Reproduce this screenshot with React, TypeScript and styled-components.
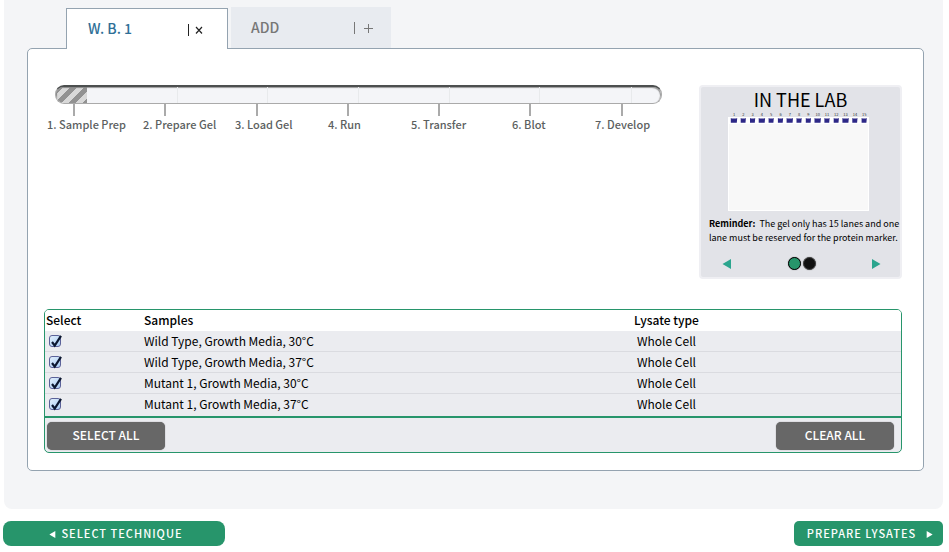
import React, { useState } from "react";
import styled, { createGlobalStyle } from "styled-components";

const GlobalStyle = createGlobalStyle`
  * { box-sizing: border-box; }
  body {
    margin: 0;
    background: #fff;
    color: #000;
    font-family: "Noto Sans CJK SC", "Noto Sans", sans-serif;
    font-size: 12px;
    line-height: 18px;
  }
  button { font-family: inherit; border: 0; padding: 0; cursor: pointer; }
`;

const Page = styled.div`
  padding: 0 6px 6px 4px;
`;

const Workspace = styled.main`
  padding: 7px 19px 38px 23px;
  background: #f4f5f7;
  border-radius: 0 0 8px 8px;
`;

const TabBar = styled.div`
  display: flex;
  align-items: flex-end;
  gap: 3px;
  padding-left: 39px;
`;

const Tab = styled.div<{ $active?: boolean }>`
  display: flex;
  align-items: center;
  justify-content: space-between;
  position: relative;
  z-index: ${(p) => (p.$active ? 1 : 0)};
  width: ${(p) => (p.$active ? 162 : 160)}px;
  height: 41px;
  margin-bottom: ${(p) => (p.$active ? -1 : 0)}px;
  padding: 0 ${(p) => (p.$active ? 24 : 17)}px 2px ${(p) => (p.$active ? 21 : 20)}px;
  background: ${(p) => (p.$active ? "#fff" : "#e8ebf0")};
  border: ${(p) => (p.$active ? "1px solid #94a3b0" : "0")};
  border-bottom: 0;
`;

const TabName = styled.button<{ $active?: boolean }>`
  background: none;
  font-size: 14px;
  font-weight: 500;
  line-height: 20px;
  color: ${(p) => (p.$active ? "#2f6f97" : "#777")};
`;

const TabAction = styled.button<{ $active?: boolean }>`
  display: flex;
  align-items: center;
  gap: ${(p) => (p.$active ? 6 : 8)}px;
  padding-top: 3px;
  background: none;
  color: ${(p) => (p.$active ? "#222" : "#777")};
  svg { display: block; }
`;

const Rule = styled.span`
  width: 1px;
  height: 12px;
  background: currentColor;
`;

const Panel = styled.section`
  padding: 36px 21px 17px 16px;
  background: #fff;
  border: 1px solid #94a3b0;
  border-radius: 5px;
`;

const Top = styled.div`
  display: flex;
  align-items: flex-start;
  gap: 37px;
  margin-bottom: 30px;
`;

const Progress = styled.div`
  flex: 1;
`;

const Track = styled.div`
  display: grid;
  height: 19px;
  margin-left: 11px;
  background: #f4f5f8;
  border: 1px solid #aaa;
  border-top: 2px solid #4c4f4f;
  border-radius: 9px;
  box-shadow: inset -1px 1px 1px #999;
  overflow: hidden;
  > * { grid-area: 1 / 1; }
`;

const Fill = styled.div`
  width: 31px;
  background: repeating-linear-gradient(135deg, #929292 0 5px, #d8d8d8 5px 10px);
  box-shadow: inset 1px 1px 1px #888;
`;

const Segments = styled.div`
  display: grid;
  grid-template-columns: 122fr 91fr 91fr 91fr 91fr 92fr 29fr;
`;

const Segment = styled.span`
  border-right: 1px solid #e8eaec;
  &:last-child { border: 0; }
`;

const Ticks = styled.div`
  display: grid;
  grid-template-columns: repeat(7, 1fr);
  margin: 0 -50px 0 29px;
`;

const Tick = styled.span`
  width: 2px;
  height: 12px;
  background: #aaa;
`;

const Steps = styled.ol`
  display: grid;
  grid-template-columns: 96fr 92fr 93fr 83fr 101fr 83fr 67fr;
  margin: 0 0 0 3px;
  padding: 0;
  list-style: none;
  font-size: 11px;
  font-weight: 500;
  line-height: 16px;
  color: #5c5f5f;
  white-space: nowrap;
`;

const LabCard = styled.aside`
  width: 203px;
  height: 194px;
  padding: 2px 0 0 8px;
  background: #e2e3e8;
  border: 2px solid #efeff3;
  border-radius: 4px;
`;

const LabTitle = styled.h2`
  margin: 0 8px 2px 0;
  font-size: 18px;
  font-weight: 400;
  line-height: 20px;
  text-align: center;
`;

const Gel = styled.svg`
  display: block;
  margin-left: 19px;
  font-family: "Noto Sans CJK SC", sans-serif;
`;

const Reminder = styled.p`
  margin: 5px 0 12px;
  font-size: 9px;
  line-height: 14px;
  white-space: nowrap;
  strong { margin-right: 2px; font-weight: 700; }
`;

const Carousel = styled.div`
  display: flex;
  align-items: center;
  justify-content: space-between;
  padding: 0 19px 0 13px;
`;

const IconButton = styled.button`
  display: block;
  background: none;
  svg { display: block; }
`;

const Dots = styled.div`
  display: flex;
  align-items: center;
  gap: 2px;
`;

const Dot = styled.button<{ $current?: boolean }>`
  width: 13px;
  height: 13px;
  background: ${(p) => (p.$current ? "#27956b" : "#111")};
  border: 1px solid ${(p) => (p.$current ? "#000" : "#444")};
  border-radius: 50%;
  box-shadow: 0 0 1px #555;
`;

const SampleBox = styled.div`
  background: #ebecf0;
  border: 1px solid #27956b;
  border-radius: 5px;
  overflow: hidden;
`;

const SampleTable = styled.table`
  width: 100%;
  border-collapse: separate;
  border-spacing: 0;
  table-layout: fixed;
`;

const HeadCell = styled.th`
  height: 21px;
  padding: 0 0 1px 1px;
  background: #fff;
  font-weight: 500;
  text-align: left;
`;

const Cell = styled.td<{ $indent?: number }>`
  height: 21px;
  padding: 0 0 1px ${(p) => p.$indent ?? 1}px;
  border-bottom: 1px solid #dadbe0;
  tr:last-child > & {
    height: 22px;
    padding-bottom: 3px;
    border-bottom: 0;
  }
`;

const Check = styled.label`
  display: block;
  position: relative;
  width: 14px;
  height: 14px;
  svg { position: absolute; left: 0; top: 0; pointer-events: none; }
  input:not(:checked) + svg { display: none; }
`;

const CheckInput = styled.input`
  display: block;
  appearance: none;
  width: 12px;
  height: 12px;
  margin: 2px 0 0;
  background: linear-gradient(135deg, #e2effc, #a9cdf5);
  border: 1px solid #5b6299;
  border-radius: 3px;
`;

const SampleFooter = styled.div`
  display: flex;
  justify-content: space-between;
  padding: 4px 7px 2px 2px;
  border-top: 2px solid #27956b;
`;

const GreyButton = styled.button`
  width: 118px;
  height: 28px;
  padding-bottom: 3px;
  background: #676767;
  border-radius: 5px;
  box-shadow: 0 0 1px #676767;
  color: #fff;
  font-size: 12px;
  font-weight: 500;
`;

const PageNav = styled.nav`
  display: flex;
  justify-content: space-between;
  margin: 12px 0 0 -1px;
`;

const NavButton = styled.button<{ $wide?: boolean }>`
  display: flex;
  align-items: center;
  justify-content: center;
  gap: ${(p) => (p.$wide ? 5 : 10)}px;
  width: ${(p) => (p.$wide ? 222 : 149)}px;
  height: 25px;
  padding: 0 0 1px ${(p) => (p.$wide ? 4 : 3)}px;
  background: #27956b;
  border-radius: ${(p) => (p.$wide ? 8 : 5)}px;
  color: #fff;
  font-size: 11px;
  font-weight: 500;
  line-height: 16px;
  letter-spacing: 1px;
  white-space: nowrap;
  svg { margin-top: 2px; }
`;

const steps = ["Sample Prep", "Prepare Gel", "Load Gel", "Run", "Transfer", "Blot", "Develop"];
const samples = [
  "Wild Type, Growth Media, 30°C",
  "Wild Type, Growth Media, 37°C",
  "Mutant 1, Growth Media, 30°C",
  "Mutant 1, Growth Media, 37°C",
];

function Arrow({ left, color, size }: { left?: boolean; color: string; size: number }) {
  return (
    <svg width={size} height={size} viewBox="0 0 10 10" aria-hidden="true">
      <path d={left ? "M9 0V10L0.5 5Z" : "M1 0V10L9.5 5Z"} fill={color} />
    </svg>
  );
}

function GelPicture() {
  return (
    <Gel width="142" height="101" viewBox="0 0 142 101" role="img" aria-label="Gel with 15 lanes">
      <path d="M0 6H141V100H0Z" fill="#fff" />
      <path d="M1 13H140V99H1Z" fill="#f8f8f8" />
      {Array.from({ length: 15 }, (_, i) => {
        const x = 6 + i * 9.3;
        const half = i % 3 === 0 ? 3.2 : 2.6;
        return (
          <g key={i}>
            <text x={x} y="4.5" fontSize="4" textAnchor="middle" fill="#333">{i + 1}</text>
            <path
              d={`M${x - half} 7L${x - half + 1} 7.6H${x + half - 1}L${x + half} 7L${x + half - 0.4} 11.8H${x - half}Z`}
              fill="#2d2887"
            />
          </g>
        );
      })}
    </Gel>
  );
}

export default function App() {
  const [checked, setChecked] = useState(samples.map(() => true));
  const [slide, setSlide] = useState(0);

  return (
    <Page>
      <GlobalStyle />
      <Workspace>
        <TabBar>
          <Tab $active>
            <TabName $active>W. B. 1</TabName>
            <TabAction $active aria-label="Close W. B. 1">
              <Rule />
              <svg width="8" height="8" viewBox="0 0 8 8" stroke="currentColor" strokeWidth="1.2">
                <path d="M1 1L7 7.5M7 1L1 7.5" />
              </svg>
            </TabAction>
          </Tab>
          <Tab>
            <TabName>ADD</TabName>
            <TabAction aria-label="Add a tab">
              <Rule />
              <svg width="11" height="11" viewBox="0 0 11 11" stroke="currentColor" strokeWidth="1">
                <path d="M1 5.5H10M5.5 1V10" />
              </svg>
            </TabAction>
          </Tab>
        </TabBar>
        <Panel>
          <Top>
            <Progress>
              <Track role="progressbar" aria-label="Progress" aria-valuenow={5}>
                <Segments>{steps.map((s) => <Segment key={s} />)}</Segments>
                <Fill />
              </Track>
              <Ticks>{steps.map((s) => <Tick key={s} />)}</Ticks>
              <Steps>{steps.map((s, i) => <li key={s}>{i + 1}. {s}</li>)}</Steps>
            </Progress>
            <LabCard>
              <LabTitle>IN THE LAB</LabTitle>
              <GelPicture />
              <Reminder>
                <strong>Reminder:</strong> The gel only has 15 lanes and one<br />
                lane must be reserved for the protein marker.
              </Reminder>
              <Carousel>
                <IconButton aria-label="Previous" onClick={() => setSlide(0)}>
                  <Arrow left color="#2ba58e" size={10} />
                </IconButton>
                <Dots>
                  {[0, 1].map((n) => (
                    <Dot key={n} $current={slide === n} aria-label={`Slide ${n + 1}`} onClick={() => setSlide(n)} />
                  ))}
                </Dots>
                <IconButton aria-label="Next" onClick={() => setSlide(1)}>
                  <Arrow color="#2ba58e" size={10} />
                </IconButton>
              </Carousel>
            </LabCard>
          </Top>
          <SampleBox>
            <SampleTable>
              <colgroup>
                <col width="98" />
                <col />
                <col width="268" />
              </colgroup>
              <thead>
                <tr>
                  <HeadCell scope="col">Select</HeadCell>
                  <HeadCell scope="col">Samples</HeadCell>
                  <HeadCell scope="col">Lysate type</HeadCell>
                </tr>
              </thead>
              <tbody>
                {samples.map((name, i) => (
                  <tr key={name}>
                    <Cell $indent={4}>
                      <Check>
                        <CheckInput
                          type="checkbox"
                          aria-label={name}
                          checked={checked[i]}
                          onChange={() => setChecked(checked.map((c, n) => (n === i ? !c : c)))}
                        />
                        <svg width="14" height="14" viewBox="0 0 14 14">
                          <path d="M3 7L5.7 10.5L12 0.8" fill="none" stroke="#0c1730" strokeWidth="2.2" />
                        </svg>
                      </Check>
                    </Cell>
                    <Cell>{name}</Cell>
                    <Cell $indent={4}>Whole Cell</Cell>
                  </tr>
                ))}
              </tbody>
            </SampleTable>
            <SampleFooter>
              <GreyButton onClick={() => setChecked(samples.map(() => true))}>SELECT ALL</GreyButton>
              <GreyButton onClick={() => setChecked(samples.map(() => false))}>CLEAR ALL</GreyButton>
            </SampleFooter>
          </SampleBox>
        </Panel>
      </Workspace>
      <PageNav>
        <NavButton $wide><Arrow left color="#fff" size={7} />SELECT TECHNIQUE</NavButton>
        <NavButton>PREPARE LYSATES<Arrow color="#fff" size={7} /></NavButton>
      </PageNav>
    </Page>
  );
}
